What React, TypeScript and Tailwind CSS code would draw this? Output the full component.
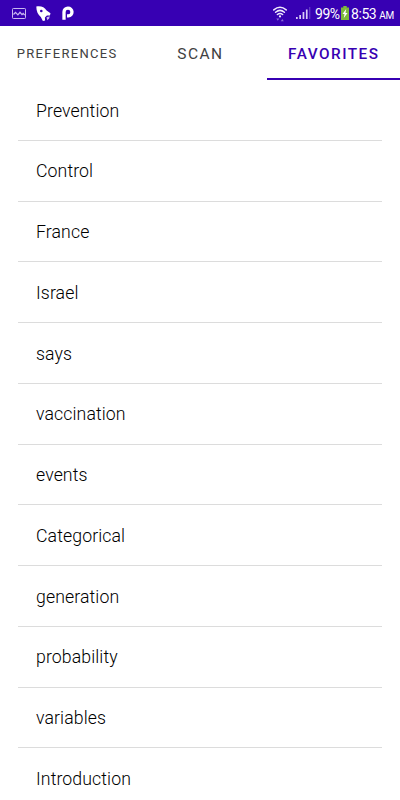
const words = [
  "Prevention", "Control", "France", "Israel", "says", "vaccination",
  "events", "Categorical", "generation", "probability", "variables", "Introduction",
];

const PictureIcon = () => (
  <svg width="14" height="11" viewBox="0 0 14 11" fill="none" stroke="#c9b8f0">
    <rect x="0.5" y="0.5" width="13" height="10" rx="0.8" />
    <path d="M1.5 6.5l2-2.2 2.4 2.6L8 4.3l2 2.4 1.2-1.2 1.5 1.7" strokeWidth="1.2" />
  </svg>
);

const RocketIcon = () => (
  <svg width="15" height="15" viewBox="0 0 15 15" fill="white">
    <path d="M0.3 0.6C4.5-0.3 8.6 1 10.6 4.6l3.9 2.6-0.6 2.2-3 0.1-2 1.9 0.2 3-2.2 0.5-2.1-4C2 8.8 0.3 5.4 0.3 0.6z" />
    <circle cx="5.3" cy="5" r="1.3" fill="#3700b3" />
    <path d="M10.5 11.2l3.3-1-0.7 2.2-1.8 1.8z" fill="#c9b8f0" />
  </svg>
);

const ParkingIcon = () => (
  <svg width="12" height="14" viewBox="0 0 12 14" fill="none" stroke="white" strokeWidth="3.3">
    <path d="M2 13.8V6a4 3.9 0 1 1 4.3 3.9H5" />
  </svg>
);

const WifiIcon = () => (
  <svg width="14" height="16" viewBox="0 0 14 16" fill="none" stroke="#efe9fc" strokeWidth="1.5" strokeLinecap="round">
    <path d="M0.8 3.9q6.2-5.4 12.4 0M2.6 6.3q4.4-3.8 8.8 0M4.4 8.5q2.6-2.1 5.2 0" />
    <circle cx="7" cy="10.4" r="1.1" fill="#efe9fc" stroke="none" />
    <path d="M3.3 12.5h3l-1.5 2.3zM7.8 15.2h3L9.3 12.9z" fill="#8b6bd6" stroke="none" />
  </svg>
);

const SignalIcon = () => (
  <svg width="15" height="13" viewBox="0 0 15 13" fill="#d9cdf7">
    <path d="M0 10h1.7v2H0zM3.3 8h1.7v4H3.3zM6.6 5h1.7v7H6.6zM9.9 2.5h1.7V12H9.9z" />
    <path d="M13.2 0h1.1v12h-1.1z" fill="#6c45cb" />
  </svg>
);

const BatteryIcon = () => (
  <svg width="8" height="14" viewBox="0 0 8 14" className="shrink-0">
    <path d="M2.3 0h3.4v1.5H8V14H0V1.5h2.3z" fill="#7db93c" />
    <path d="M5.2 3L1.5 8h2L2.8 12l3.7-5h-2z" fill="white" />
  </svg>
);

const StatusBar = () => {
  return (
    <div className="h-[26px] bg-[#3700b3] text-white flex items-center justify-between pl-3 pr-[6px]">
      <div className="flex items-center">
        <PictureIcon />
        <span className="ml-[10px]"><RocketIcon /></span>
        <span className="ml-[11px]"><ParkingIcon /></span>
      </div>
      <div className="flex items-center">
        <span className="pt-px"><WifiIcon /></span>
        <span className="ml-[9px] pt-px"><SignalIcon /></span>
        <span className="text-[14px] leading-none ml-1 pt-[2px] w-[26px] tracking-[-0.4px]">99%</span>
        <BatteryIcon />
        <span className="text-[14px] leading-none ml-[2px] pt-[2px] tracking-[-0.4px]">8:53</span>
        <span className="text-[10px] leading-none ml-[3px] pt-[5px] tracking-[-0.3px]">AM</span>
      </div>
    </div>
  );
};

const App = () => {
  return (
    <div className="h-[800px] overflow-hidden bg-white font-[Roboto,sans-serif]">
      <StatusBar />
      <nav className="grid grid-cols-3 h-[54px] text-[#414141]">
        <button className="text-[13px] tracking-[1.3px] pt-px pl-px">PREFERENCES</button>
        <button className="text-[15.5px] tracking-[1.45px] pt-[3px] pl-px">SCAN</button>
        <button className="text-[15.3px] tracking-[1.5px] pt-[5px] pl-px font-medium text-[#3700b3] border-b-2 border-[#3700b3]">FAVORITES</button>
      </nav>
      <ul className="px-[18px]">
        {words.map((word) => (
          <li key={word} className="h-[60.75px] pl-[18px] pt-0.5 flex items-center text-[17.7px] tracking-[0.1px] font-light text-black border-b border-[#dcdcdc]">{word}</li>
        ))}
      </ul>
    </div>
  );
};

export default App;
